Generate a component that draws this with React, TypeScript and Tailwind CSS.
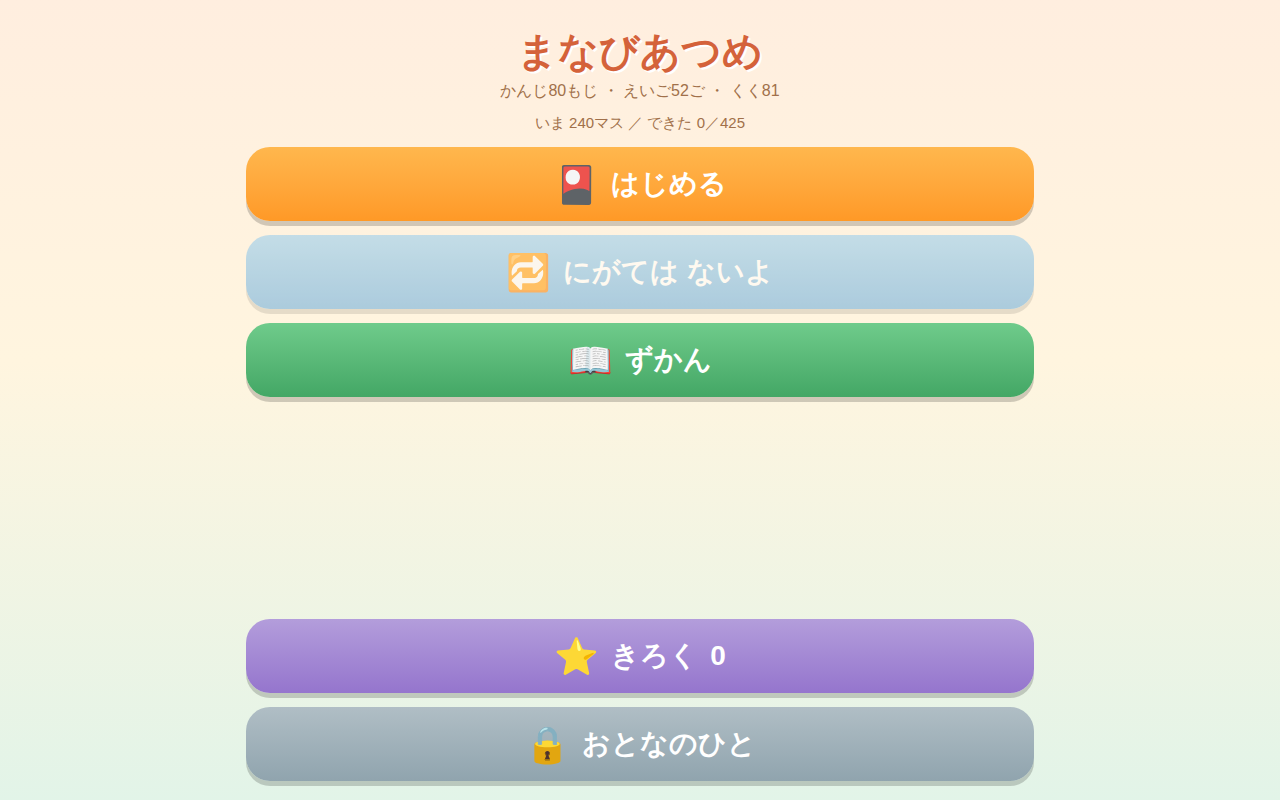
import React from "react";
import clsx from "clsx";

type MenuButtonProps = {
  icon: string;
  label: string;
  colors: string;
  disabled?: boolean;
  count?: number;
};

const MenuButton = ({ icon, label, colors, disabled, count }: MenuButtonProps) => (
  <button
    type="button"
    disabled={disabled}
    className={clsx(
      "flex h-[74px] w-full items-center justify-center gap-3 rounded-3xl bg-linear-to-b text-[28px] leading-9 font-bold text-white shadow-[0_5px_0_rgba(0,0,0,0.18)] disabled:opacity-55",
      colors
    )}
  >
    <span className="text-[36px] leading-[39px]" aria-hidden="true">
      {icon}
    </span>
    <span>{label}</span>
    {count !== undefined && <span>{count}</span>}
  </button>
);

const App = () => {
  return (
    <div className="min-h-screen bg-linear-to-b from-[#ffeedf] via-[#fff5df] via-45% to-[#e2f4e8] font-['Liberation_Sans',sans-serif]">
      <main
        lang="ja"
        className="mx-auto flex min-h-screen max-w-[820px] flex-col px-4 pt-[27px] pb-[19px]"
      >
        <header className="text-center text-[#a1704a]">
          <h1 className="text-[40px] leading-12 font-bold text-[#d4623a] [text-shadow:2px_2px_0_#fff]">
            まなびあつめ
          </h1>
          <p className="mt-1 text-base leading-6">
            かんじ80もじ ・ えいご52ご ・ くく81
          </p>
          <p className="mt-2 text-[15px] leading-6">
            いま 240マス ／ できた 0／425
          </p>
        </header>

        <nav className="mt-3 flex grow flex-col gap-[14px]">
          <MenuButton icon="🎴" label="はじめる" colors="from-[#ffb74d] to-[#ff9926]" />
          <MenuButton
            icon="🔁"
            label="にがては ないよ"
            colors="from-[#94ccee] to-[#68abdc]"
            disabled
          />
          <MenuButton icon="📖" label="ずかん" colors="from-[#6fcb8b] to-[#43a765]" />
          <div className="mt-auto flex flex-col gap-[14px]">
            <MenuButton
              icon="⭐"
              label="きろく"
              colors="from-[#b39ddb] to-[#9575cd]"
              count={0}
            />
            <MenuButton
              icon="🔒"
              label="おとなのひと"
              colors="from-[#b0bec5] to-[#90a4ae]"
            />
          </div>
        </nav>
      </main>
    </div>
  );
};

export default App;
